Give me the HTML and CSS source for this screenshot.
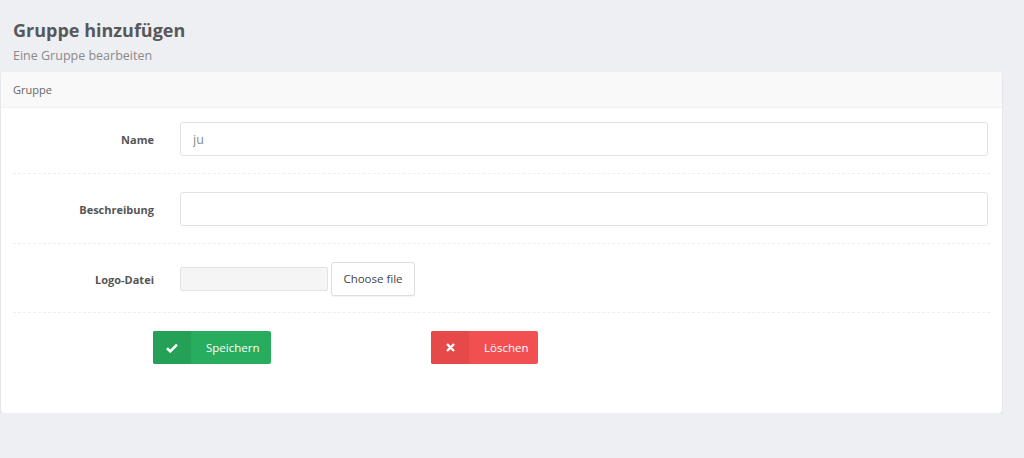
FILE: index.html
```html
<!DOCTYPE html>
<html lang="de">
<head>
    <meta charset="UTF-8">
    <title>Gruppe hinzufügen</title>
    <link rel="stylesheet" href="styles.css">
</head>
<body>

    <!-- Page header -->
    <div class="page-header">
        <h1>Gruppe hinzufügen</h1>
        <div class="subtitle">Eine Gruppe bearbeiten</div>
    </div>

    <div class="panel">
        <div class="panel-heading">Gruppe</div>
        <form class="panel-body">
            <div class="form-group">
                <label>Name</label>
                <div class="field"><input type="text" class="form-control" value="ju"></div>
            </div>
            <div class="form-group">
                <label>Beschreibung</label>
                <div class="field"><input type="text" class="form-control"></div>
            </div>
            <div class="form-group form-group-file">
                <label>Logo-Datei</label>
                <div class="field file-field">
                    <span class="file-name"></span>
                    <span class="file-btn">Choose file</span>
                </div>
            </div>
            <div class="actions">
                <button type="button" class="btn btn-green">
                    <span class="btn-icon">
                        <svg width="12" height="10" viewBox="0 0 12 10"><path d="M1 5.2 L4.3 8.3 L11 1.6" fill="none" stroke="#fff" stroke-width="2.6"/></svg>
                    </span>
                    <span class="btn-label">Speichern</span>
                </button>
                <button type="button" class="btn btn-red">
                    <span class="btn-icon">
                        <svg width="9" height="9" viewBox="0 0 9 9"><path d="M1 1 L8 8 M8 1 L1 8" fill="none" stroke="#fff" stroke-width="2.4"/></svg>
                    </span>
                    <span class="btn-label">Löschen</span>
                </button>
            </div>
        </form>
    </div>

</body>
</html>
```
FILE: styles.css
```css
body {
    margin: 0;
    padding: 0;
    background-color: #eeeff3;
    font-family: "Open Sans", "Noto Sans", sans-serif;
    color: #555;
}
.page-header {
    padding: 17px 13px 7px;
}
.page-header h1 {
    margin: 0;
    font-size: 18px;
    font-weight: 700;
    color: #585858;
    line-height: 26px;
}
.subtitle {
    margin-top: 4px;
    font-size: 12.5px;
    color: #8a8a8a;
    line-height: 18px;
}
.panel {
    margin: 0 22px 0 1px;
    background-color: #fff;
    border-radius: 3px;
    box-shadow: 0 1px 2px rgba(0, 0, 0, 0.12);
}
.panel-heading {
    height: 35px;
    line-height: 35px;
    padding: 0 12px;
    font-size: 11px;
    color: #666;
    background-color: #f9f9f9;
    border-bottom: 1px solid #f0f0f0;
    border-radius: 3px 3px 0 0;
}
.panel-body {
    margin: 0;
    padding: 14px 12px 49px 12px;
}
.form-group {
    display: flex;
    align-items: center;
    padding-bottom: 17px;
    margin-bottom: 18px;
    border-bottom: 1px dashed #eee;
}
.form-group-file {
    padding-bottom: 16px;
}
.form-group label {
    width: 141px;
    text-align: right;
    font-size: 11px;
    font-weight: 700;
    color: #555;
}
.field {
    flex: 1;
    margin-left: 26px;
    margin-right: 2px;
}
.form-control {
    display: block;
    width: 100%;
    height: 34px;
    box-sizing: border-box;
    padding: 0 12px;
    border: 1px solid #e2e2e2;
    border-radius: 3px;
    font-family: inherit;
    font-size: 12.5px;
    color: #888;
}
.file-field {
    display: flex;
    align-items: center;
}
.file-name {
    width: 148px;
    height: 24px;
    box-sizing: border-box;
    border: 1px solid #e2e2e2;
    border-radius: 2px;
    background-color: #f5f5f5;
}
.file-btn {
    margin-left: 3px;
    width: 84px;
    height: 34px;
    line-height: 32px;
    box-sizing: border-box;
    text-align: center;
    border: 1px solid #ddd;
    border-radius: 3px;
    font-size: 11.5px;
    color: #444;
    box-shadow: 0 1px 1px rgba(0, 0, 0, 0.05);
}
.actions {
    display: flex;
    gap: 160px;
    padding-left: 140px;
}
.btn {
    display: flex;
    height: 33px;
    padding: 0;
    border: none;
    border-radius: 2px;
    overflow: hidden;
    font-family: inherit;
    font-size: 11.5px;
    color: #fff;
    cursor: pointer;
}
.btn-icon {
    width: 38px;
    display: flex;
    align-items: center;
    justify-content: center;
}
.btn-label {
    display: flex;
    align-items: center;
    padding-left: 15px;
}
.btn-green {
    width: 118px;
    background-color: #28ad5e;
}
.btn-green .btn-icon {
    background-color: #25a157;
}
.btn-red {
    width: 107px;
    background-color: #f25050;
}
.btn-red .btn-icon {
    background-color: #e54949;
}
```
